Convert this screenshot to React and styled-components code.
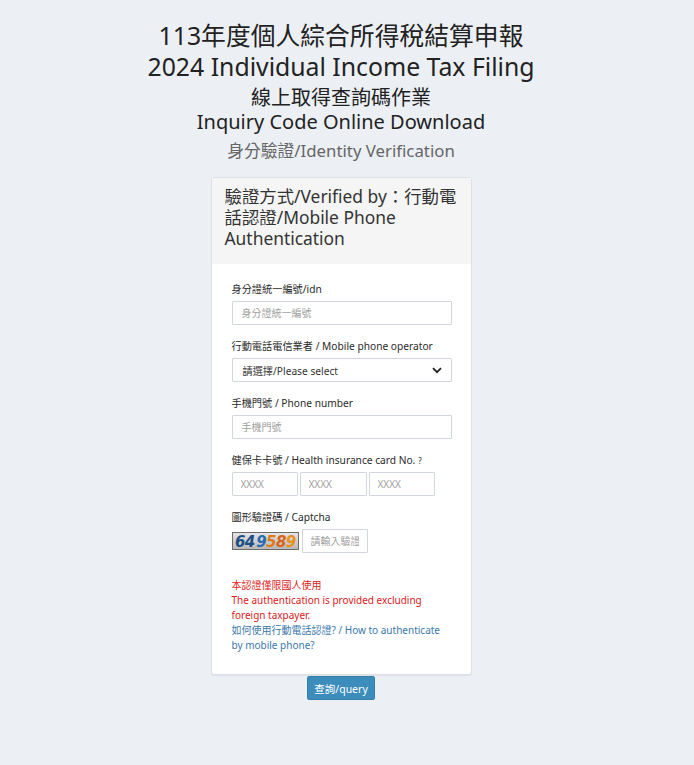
import React from "react";
import styled, { createGlobalStyle } from "styled-components";

const GlobalStyle = createGlobalStyle`
  html, body {
    margin: 0;
    padding: 0;
    background: #ecf0f5;
  }
  body {
    font-family: "Noto Sans", "Noto Sans CJK TC", sans-serif;
    color: #333;
  }
  * { box-sizing: border-box; }
`;

const Page = styled.div`
  min-height: 765px;
  padding: 20px 12px 40px 0;
  display: flex;
  flex-direction: column;
  align-items: center;
`;

const Heading = styled.div`
  text-align: center;
  color: #222;
  h1 {
    margin: 0;
    font-size: 24.8px;
    line-height: 31px;
    font-weight: 400;
  }
  h2 {
    margin: 4px 0 0;
    font-size: 20px;
    line-height: 24px;
    font-weight: 400;
  }
  h3 {
    margin: 5px 0 0;
    font-size: 16.8px;
    line-height: 24px;
    font-weight: 400;
    color: #666;
  }
`;

const Card = styled.div`
  width: 261px;
  margin-top: 14px;
  background: #fff;
  border: 1px solid #dde1e6;
  border-radius: 3px;
  box-shadow: 0 1px 1px rgba(0, 0, 0, 0.06);
`;

const CardHeader = styled.div`
  background: #f5f5f5;
  padding: 8px 10px 15px 13px;
  font-size: 17.4px;
  line-height: 21px;
  color: #333;
  white-space: nowrap;
`;

const CardBody = styled.div`
  padding: 18px 20px 21px;
`;

const Field = styled.div`
  margin-bottom: 14px;
`;

const Label = styled.div`
  font-size: 10.2px;
  line-height: 15px;
  height: 15px;
  color: #2a2a2a;
  margin-bottom: 4px;
`;

const Hint = styled.span`
  font-size: 8px;
  margin-left: 3px;
`;

const Input = styled.input`
  display: block;
  width: ${(p) => p.$width || "220px"};
  height: 24px;
  padding: 0 ${(p) => p.$pad || "9px"};
  border: 1px solid #d2d6de;
  border-radius: 1px;
  font-family: inherit;
  font-size: 10px;
  color: #333;
  background: #fff;
  outline: none;
  &::placeholder {
    color: #a0a0a0;
  }
`;

const Select = styled.div`
  width: 220px;
  height: 24px;
  padding: 0 9px 0 10px;
  border: 1px solid #d2d6de;
  border-radius: 1px;
  display: flex;
  align-items: center;
  justify-content: space-between;
  font-size: 10.2px;
  color: #333;
`;

const Row = styled.div`
  display: flex;
  align-items: center;
  gap: ${(p) => p.$gap || "2px"};
`;

const Notes = styled.div`
  margin-top: 25px;
  font-size: 10px;
  line-height: 15px;
`;

const Warn = styled.div`
  color: #dd1a1a;
`;

const HelpLink = styled.a`
  color: #3a78ad;
  text-decoration: none;
`;

const QueryButton = styled.button`
  margin-top: 1px;
  width: 68px;
  height: 24px;
  border: 1px solid #367fa9;
  border-radius: 2px;
  background: #3c8dbc;
  color: #fff;
  font-family: inherit;
  font-size: 10.5px;
  padding: 0;
  cursor: pointer;
`;

function Captcha() {
  return (
    <svg width="67" height="18" viewBox="0 0 67 18">
      <defs>
        <linearGradient id="cap" x1="0" y1="0" x2="0" y2="1">
          <stop offset="0" stopColor="#e6e6e6" />
          <stop offset="0.5" stopColor="#cfcfcf" />
          <stop offset="1" stopColor="#b5b5b5" />
        </linearGradient>
      </defs>
      <rect x="0.5" y="0.5" width="66" height="17" fill="url(#cap)" stroke="#6b6b6b" />
      <text
        x="3"
        y="14.5"
        fontFamily="DejaVu Sans, sans-serif"
        fontWeight="bold"
        fontStyle="italic"
        fontSize="15"
        letterSpacing="-0.6"
      >
        <tspan fill="#1c4f86">6</tspan>
        <tspan fill="#1c4f86">4</tspan>
        <tspan fill="#2a6bb0" dx="1.5">9</tspan>
        <tspan fill="#e07a1c">5</tspan>
        <tspan fill="#d8641a">8</tspan>
        <tspan fill="#e8901c">9</tspan>
      </text>
    </svg>
  );
}

function Chevron() {
  return (
    <svg width="10" height="7" viewBox="0 0 10 7">
      <path d="M1 1.2 L5 5.2 L9 1.2" fill="none" stroke="#222" strokeWidth="1.8" />
    </svg>
  );
}

export default function App() {
  return (
    <>
      <GlobalStyle />
      <Page>
        <Heading>
          <h1>
            113年度個人綜合所得稅結算申報
            <br />
            2024 Individual Income Tax Filing
          </h1>
          <h2>
            線上取得查詢碼作業
            <br />
            Inquiry Code Online Download
          </h2>
          <h3>身分驗證/Identity Verification</h3>
        </Heading>

        <Card>
          <CardHeader>
            驗證方式/Verified by：行動電
            <br />
            話認證/Mobile Phone
            <br />
            Authentication
          </CardHeader>
          <CardBody>
            <Field>
              <Label>身分證統一編號/idn</Label>
              <Input placeholder="身分證統一編號" />
            </Field>
            <Field>
              <Label>行動電話電信業者 / Mobile phone operator</Label>
              <Select>
                <span>請選擇/Please select</span>
                <Chevron />
              </Select>
            </Field>
            <Field>
              <Label>手機門號 / Phone number</Label>
              <Input placeholder="手機門號" />
            </Field>
            <Field>
              <Label>
                健保卡卡號 / Health insurance card No.<Hint>?</Hint>
              </Label>
              <Row>
                <Input $width="66px" $pad="8px" placeholder="XXXX" />
                <Input $width="67px" $pad="8px" placeholder="XXXX" />
                <Input $width="66px" $pad="8px" placeholder="XXXX" />
              </Row>
            </Field>
            <Field>
              <Label>圖形驗證碼 / Captcha</Label>
              <Row $gap="3px">
                <Captcha />
                <Input $width="66px" $pad="8px" placeholder="請輸入驗證" />
              </Row>
            </Field>
            <Notes>
              <Warn>
                本認證僅限國人使用
                <br />
                The authentication is provided excluding foreign taxpayer.
              </Warn>
              <HelpLink href="#">
                如何使用行動電話認證? / How to authenticate by mobile phone?
              </HelpLink>
            </Notes>
          </CardBody>
        </Card>
        <QueryButton>查詢/query</QueryButton>
      </Page>
    </>
  );
}
